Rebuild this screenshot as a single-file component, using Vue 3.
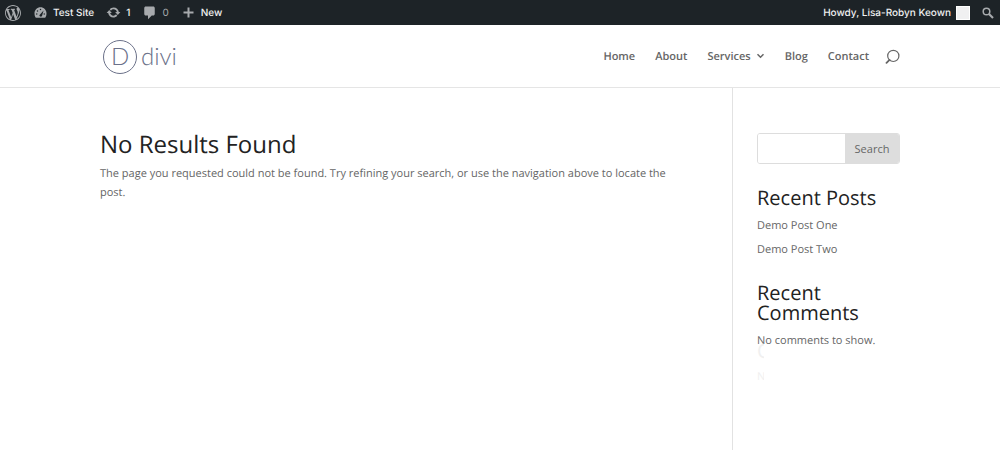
<script setup>
import { ref } from 'vue'

const query = ref('')
const posts = ['Demo Post One', 'Demo Post Two']
const menu = [
  { label: 'Home' },
  { label: 'About' },
  { label: 'Services', children: true },
  { label: 'Blog' },
  { label: 'Contact' },
]
</script>

<template>
  <div class="page">
    <div class="adminbar">
      <a class="ab-item wp" href="#" aria-label="About WordPress">
        <svg width="16" height="16" viewBox="0 0 20 20"><path fill="#a7aaad" d="M20 10c0-5.51-4.49-10-10-10C4.48 0 0 4.49 0 10c0 5.52 4.48 10 10 10 5.51 0 10-4.48 10-10zM7.78 15.37L4.37 6.22c.55-.02 1.17-.08 1.17-.08.5-.06.44-1.13-.06-1.11 0 0-1.45.11-2.37.11-.18 0-.37 0-.58-.01C4.12 2.69 6.87 1.11 10 1.11c2.33 0 4.45.87 6.05 2.34-.68-.11-1.65.39-1.65 1.58 0 .74.45 1.36.9 2.1.35.61.55 1.36.55 2.46 0 1.49-1.4 5-1.4 5l-3.03-8.37c.54-.02.82-.17.82-.17.5-.05.44-1.25-.06-1.22 0 0-1.44.12-2.38.12-.87 0-2.33-.12-2.33-.12-.5-.03-.56 1.2-.06 1.22l.92.08 1.26 3.41zM17.41 10c.24-.64.74-1.87.43-4.25.7 1.29 1.05 2.71 1.05 4.25 0 3.29-1.73 6.24-4.4 7.78.97-2.59 1.94-5.2 2.92-7.78zM6.1 18.09C3.12 16.65 1.11 13.53 1.11 10c0-1.3.23-2.48.72-3.59C3.25 10.3 4.67 14.2 6.1 18.09zm4.03-6.63l2.58 6.98c-.86.29-1.76.45-2.71.45-.79 0-1.57-.11-2.29-.33.81-2.38 1.62-4.74 2.42-7.1z"/></svg>
      </a>
      <a class="ab-item site" href="#">
        <svg width="15" height="15" viewBox="0 0 20 20"><path fill="#a7aaad" d="M3.76 17h12.48c1.34-1.630 1.760-3.730 1.760-6 0-4.410-3.580-8-8-8s-8 3.590-8 8c0 2.270.42 4.370 1.760 6zM9 6c0-.55.45-1 1-1s1 .45 1 1-.45 1-1 1-1-.45-1-1zM5 8c0-.55.45-1 1-1s1 .45 1 1-.45 1-1 1-1-.45-1-1zm3.570 6c0-.59.32-1.120.81-1.400L14.100 7.200l-1.900 6.900c-.06.840-.78 1.500-1.630 1.500-1.100 0-2-.71-2-1.600zM4 12c0-.55.45-1 1-1s1 .45 1 1-.45 1-1 1-1-.45-1-1zm10 0c0-.55.45-1 1-1s1 .45 1 1-.45 1-1 1-1-.45-1-1z"/></svg>
        <span>Test Site</span>
      </a>
      <a class="ab-item" href="#">
        <svg width="15" height="15" viewBox="0 0 20 20"><path fill="#a7aaad" d="M10.200 3.280c3.530 0 6.430 2.610 6.920 6h2.080l-3.500 4-3.500-4h2.320c-.45-1.970-2.210-3.450-4.320-3.450-1.450 0-2.730.71-3.540 1.780L4.950 5.660C6.230 4.200 8.110 3.280 10.200 3.280zm-.4 13.440c-3.520 0-6.430-2.610-6.920-6H.8l3.500-4c1.170 1.330 2.330 2.670 3.500 4H5.480c.45 1.970 2.210 3.450 4.320 3.450 1.450 0 2.730-.71 3.540-1.780l1.710 1.950c-1.280 1.460-3.150 2.380-5.250 2.380z"/></svg>
        <span>1</span>
      </a>
      <a class="ab-item" href="#">
        <svg width="15" height="15" viewBox="0 0 20 20"><path fill="#a7aaad" d="M5 2h10c1.100 0 2 .9 2 2v8c0 1.100-.9 2-2 2h-2l-5 5v-5H5c-1.100 0-2-.9-2-2V4c0-1.100.9-2 2-2z"/></svg>
        <span class="zero">0</span>
      </a>
      <a class="ab-item" href="#">
        <svg width="15" height="15" viewBox="0 0 15 15"><path stroke="#a7aaad" stroke-width="2" d="M7.500 2.500v10M2.500 7.500h10"/></svg>
        <span>New</span>
      </a>
      <a class="ab-item howdy" href="#">
        <span>Howdy, Lisa-Robyn Keown</span>
        <i class="avatar"></i>
      </a>
      <button type="button" aria-label="Search the site">
        <svg width="12" height="12" viewBox="0 0 12 12" fill="none" stroke="#a7aaad"><circle cx="4.500" cy="4.500" r="3.300" stroke-width="1.500"/><path d="M7 7l4 4" stroke-width="2.200"/></svg>
      </button>
    </div>

    <header class="header">
      <div class="container bar">
        <a class="logo" href="#" aria-label="Divi home">
          <span class="mark">D</span><span>divi</span>
        </a>
        <nav class="nav">
          <a v-for="m in menu" :key="m.label" href="#">{{ m.label }}<svg v-if="m.children" width="9" height="6" viewBox="0 0 9 6"><path d="M1.500 1.200l3 3 3-3" fill="none" stroke="#666" stroke-width="1.500"/></svg></a>
          <button type="button" aria-label="Open search">
            <svg width="15" height="15" viewBox="0 0 15 15" fill="none" stroke="#666"><circle cx="8.300" cy="6.900" r="5.600" stroke-width="1.200"/><path d="M4.500 10.900L1.500 13.900" stroke-width="1.800" stroke-linecap="round"/></svg>
          </button>
        </nav>
      </div>
    </header>

    <div class="container content">
      <main>
        <h1>No Results Found</h1>
        <p>The page you requested could not be found. Try refining your search, or use the navigation above to locate the post.</p>
      </main>
      <aside>
        <form class="search" role="search" @submit.prevent>
          <input v-model="query" type="text" aria-label="Search for" />
          <button type="submit">Search</button>
        </form>
        <section>
          <h2>Recent Posts</h2>
          <ul>
            <li v-for="p in posts" :key="p"><a href="#">{{ p }}</a></li>
          </ul>
        </section>
        <section class="comments">
          <h2>Recent Comments</h2>
          <p>No comments to show.</p>
          <div class="ghost" aria-hidden="true">
            <span class="ghost-title">C</span>
            <span>N</span>
          </div>
        </section>
      </aside>
    </div>
  </div>
</template>

<style>
body {
  margin: 0;
  background: #fff;
}
</style>

<style scoped>
* {
  box-sizing: border-box;
}
.page {
  display: flex;
  flex-direction: column;
  min-height: 100vh;
  padding-bottom: 3px;
  color: #666;
  font: 11px/19px "Open Sans", sans-serif;
  text-rendering: geometricPrecision;
}
a {
  color: inherit;
  text-decoration: none;
}
button {
  padding: 0;
  border: 0;
  background: none;
  color: inherit;
  font: inherit;
}
svg {
  display: block;
  flex: none;
}
.adminbar {
  display: flex;
  align-items: center;
  gap: 12px;
  height: 25px;
  padding: 0 6px 0 5px;
  background: #1d2327;
  color: #f0f0f1;
  font: 500 10px/26px Inter, sans-serif;
}
.ab-item {
  display: flex;
  align-items: center;
  gap: 5px;
  white-space: nowrap;
}
.zero {
  color: #a7aaad;
  font-weight: 400;
}
.howdy {
  margin-left: auto;
}
.avatar {
  width: 14px;
  height: 14px;
  border: 1px solid #fff;
  background: #f0f0f1;
}
.container {
  width: 80%;
  margin: 0 auto;
}
.header {
  border-bottom: 1px solid #e5e5e5;
}
.bar {
  display: flex;
  align-items: center;
  justify-content: space-between;
  height: 62px;
}
.logo {
  display: flex;
  align-items: center;
  gap: 4px;
  padding: 2px 3px 0;
  color: #6b7189;
  font: 300 24px/34px Lato, sans-serif;
}
.mark {
  width: 34px;
  height: 34px;
  border: 1px solid #6b7189;
  border-radius: 50%;
  line-height: 32px;
  text-align: center;
}
.nav {
  display: flex;
  align-items: center;
  gap: 20px;
  font-weight: 600;
}
.nav a {
  display: flex;
  align-items: center;
  gap: 5px;
}
.nav button {
  margin-left: -4px;
}
.content {
  display: flex;
  flex: 1;
}
main {
  flex: 1;
  padding: 45px 60px 0 0;
}
aside {
  width: 21%;
  padding: 45px 0 0 24px;
  border-left: 1px solid #e2e2e2;
}
h1,
h2 {
  margin: 0;
  color: #222;
  font-weight: 400;
}
h1 {
  padding-bottom: 7px;
  font-size: 24px;
  line-height: 24px;
}
h2 {
  padding-bottom: 8px;
  font-size: 20px;
  line-height: 20px;
}
p,
ul {
  margin: 0;
  padding: 0;
}
ul {
  display: grid;
  gap: 5px;
  list-style: none;
}
section {
  margin-top: 24px;
}
.comments {
  position: relative;
}
.ghost {
  position: absolute;
  top: 58px;
  left: 0;
  display: grid;
  gap: 6px;
  width: 7px;
  overflow: hidden;
  color: #f0f0f0;
  pointer-events: none;
}
.ghost-title {
  font-size: 20px;
  line-height: 20px;
}
.search {
  display: flex;
  height: 31px;
  overflow: hidden;
  border: 1px solid #ddd;
  border-radius: 3px;
}
.search input {
  flex: 1;
  min-width: 0;
  padding: 0 8px;
  border: 0;
  outline: 0;
  background: #fff;
  color: inherit;
  font: inherit;
}
.search button {
  width: 54px;
  background: #ddd;
}
</style>
